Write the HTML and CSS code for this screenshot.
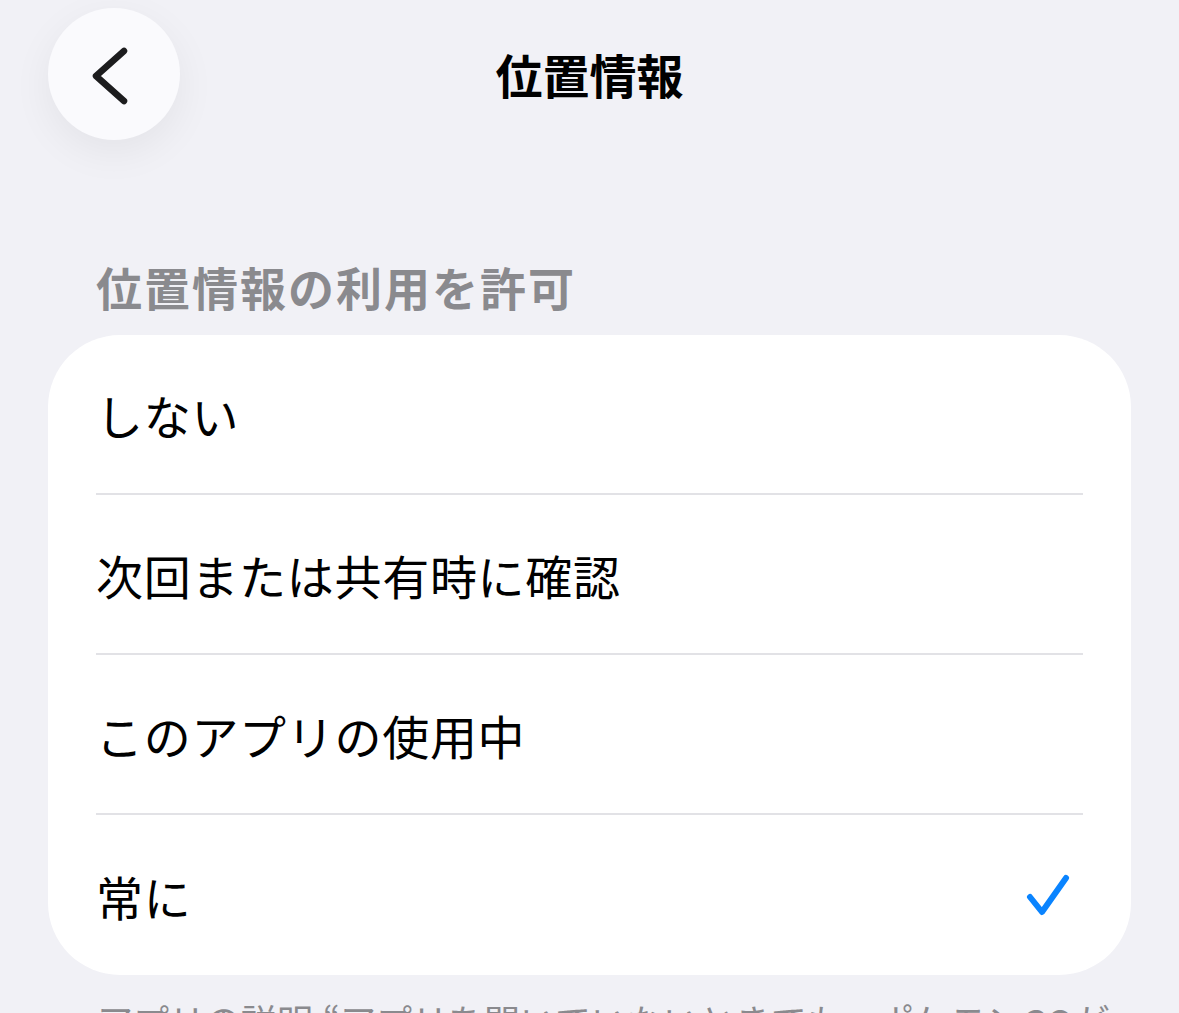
FILE: index.html
```html
<!DOCTYPE html>
<html lang="ja">
<head>
  <meta charset="UTF-8">
  <meta name="viewport" content="width=device-width, initial-scale=1.0">
  <title>位置情報</title>
  <link rel="stylesheet" href="styles.css">
</head>
<body>
  <div class="screen">
    <header class="nav">
      <button class="back-btn" aria-label="戻る">
        <svg width="132" height="132" viewBox="0 0 132 132">
          <path d="M76 43 L48 68 L76 93" fill="none" stroke="#1c1c1e" stroke-width="6.5" stroke-linecap="round" stroke-linejoin="round"/>
        </svg>
      </button>
      <h1 class="nav-title">位置情報</h1>
      <div class="nav-spacer"></div>
    </header>

    <h2 class="section-title">位置情報の利用を許可</h2>

    <ul class="options">
      <li class="option">しない</li>
      <li class="option">次回または共有時に確認</li>
      <li class="option">このアプリの使用中</li>
      <li class="option selected">
        <span>常に</span>
        <svg class="check" width="48" height="48" viewBox="0 0 48 48">
          <path d="M7 25 L19 40 L43 6" fill="none" stroke="#0a84ff" stroke-width="6" stroke-linecap="round" stroke-linejoin="round"/>
        </svg>
      </li>
    </ul>

    <p class="footer-note">アプリの説明:“アプリを開いていないときでも、ポケモンGOが近くのポケモンをお知らせします。”</p>
  </div>
</body>
</html>
```

FILE: styles.css
```css
body {
  margin: 0;
  padding: 0;
  background: #f1f1f6;
  font-family: "Noto Sans CJK JP", "Noto Sans", sans-serif;
  color: #000;
  overflow: hidden;
}

.screen {
  height: 1013px;
  overflow: hidden;
}

.nav {
  display: grid;
  grid-template-columns: 1fr auto 1fr;
  align-items: center;
  padding: 8px 48px 0;
}

.back-btn {
  width: 132px;
  height: 132px;
  padding: 0;
  border: none;
  border-radius: 50%;
  background: #fafafd;
  box-shadow: 0 12px 40px rgba(0, 0, 0, 0.06);
  display: flex;
  align-items: center;
  justify-content: center;
  cursor: pointer;
}

.nav-title {
  margin: 0;
  font-size: 47px;
  font-weight: 700;
  line-height: 1;
  margin-top: -2px;
}

.section-title {
  margin: 118px 0 0;
  padding-left: 96px;
  font-size: 46px;
  font-weight: 600;
  line-height: 56px;
  letter-spacing: 2px;
  color: #8a8a8e;
}

.options {
  list-style: none;
  margin: 21px 48px 0;
  padding: 0 48px;
  background: #fff;
  border-radius: 72px;
}

.option {
  height: 158px;
  display: flex;
  align-items: center;
  justify-content: space-between;
  font-size: 47px;
  line-height: 1;
  letter-spacing: 0.7px;
  border-bottom: 2px solid #e2e2e6;
}

.option:last-child {
  border-bottom: none;
  height: 160px;
}

.check {
  margin-right: 12px;
  margin-top: 2px;
}

.footer-note {
  margin: 21px 0 0;
  padding: 0 48px 0 97px;
  font-size: 36px;
  line-height: 48px;
  color: #8a8a8e;
}
```
